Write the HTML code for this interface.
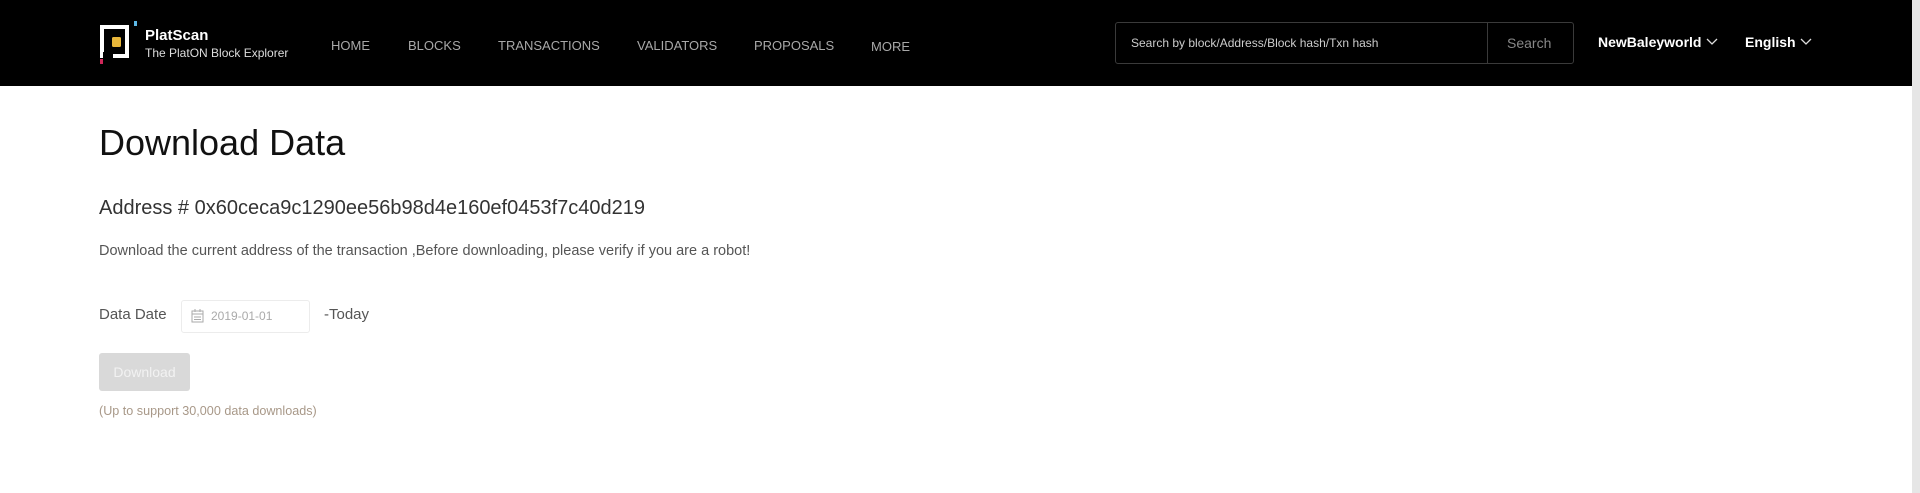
<!DOCTYPE html>
<html><head><meta charset="utf-8"><style>
*{margin:0;padding:0;box-sizing:border-box}
body{width:1920px;height:493px;overflow:hidden;background:#fff;font-family:"Liberation Sans",sans-serif;position:relative}
.hdr{position:absolute;left:0;top:0;width:1912px;height:86px;background:#000}
.sb{position:absolute;right:0;top:0;width:8px;height:493px;background:#e6e6e6}
.a{position:absolute;white-space:nowrap}
.nav{color:#a8a8a8;font-size:13px;top:38px}
</style></head><body>
<div class="hdr">
  <svg class="a" style="left:98px;top:20px" width="40" height="46" viewBox="0 0 40 46">
    <rect x="4" y="7" width="25" height="29" fill="none" stroke="#fff" stroke-width="4"/>
    <rect x="14" y="17" width="9" height="10" rx="1.5" fill="#e8b63a"/>
    <rect x="5" y="32" width="10" height="6" fill="#000"/>
    <rect x="36" y="1" width="3" height="5" fill="#5cb8e6"/>
    <rect x="2" y="39" width="3" height="5" fill="#d0285a"/>
  </svg>
  <div class="a" style="left:145px;top:27px;color:#fff;font-weight:bold;font-size:15px">PlatScan</div>
  <div class="a" style="left:145px;top:46px;color:#ddd;font-size:12px">The PlatON Block Explorer</div>
  <div class="a nav" style="left:331px">HOME</div>
  <div class="a nav" style="left:408px">BLOCKS</div>
  <div class="a nav" style="left:498px">TRANSACTIONS</div>
  <div class="a nav" style="left:637px">VALIDATORS</div>
  <div class="a nav" style="left:754px">PROPOSALS</div>
  <div class="a nav" style="left:871px;top:39px">MORE</div>
  <div class="a" style="left:1115px;top:22px;width:459px;height:42px;border:1px solid #3a3a3a;border-radius:3px"></div>
  <div class="a" style="left:1487px;top:22px;width:1px;height:42px;background:#3a3a3a"></div>
  <div class="a" style="left:1131px;top:36px;color:#ccc;font-size:12px">Search by block/Address/Block hash/Txn hash</div>
  <div class="a" style="left:1507px;top:35px;color:#888;font-size:14px">Search</div>
  <div class="a" style="left:1598px;top:34px;color:#fff;font-size:14px;font-weight:bold">NewBaleyworld</div>
  <div class="a" style="left:1745px;top:34px;color:#fff;font-size:14px;font-weight:bold">English</div>
  <svg class="a" style="left:1706px;top:38px" width="12" height="8"><path d="M1 1l5 5 5-5" fill="none" stroke="#ddd" stroke-width="1.3"/></svg>
  <svg class="a" style="left:1800px;top:38px" width="12" height="8"><path d="M1 1l5 5 5-5" fill="none" stroke="#ddd" stroke-width="1.3"/></svg>
</div>
<div class="sb"></div>
<div class="a" style="left:99px;top:122px;font-size:36px;color:#111">Download Data</div>
<div class="a" style="left:99px;top:197px;font-size:20px;color:#333">Address # 0x60ceca9c1290ee56b98d4e160ef0453f7c40d219</div>
<div class="a" style="left:99px;top:243px;font-size:14.5px;color:#555">Download the current address of the transaction ,Before downloading, please verify if you are a robot!</div>
<div class="a" style="left:99px;top:306px;font-size:15px;color:#555">Data Date</div>
<div class="a" style="left:181px;top:300px;width:129px;height:33px;border:1px solid #ececec;border-radius:3px"></div>
<svg class="a" style="left:191px;top:309px" width="13" height="14" viewBox="0 0 13 14"><rect x="1" y="2" width="11" height="11" fill="none" stroke="#aaa"/><path d="M1 5h11M4 0v3M9 0v3M3 8h7M3 10.5h7" stroke="#aaa"/></svg>
<div class="a" style="left:211px;top:309px;font-size:12px;color:#aaa">2019-01-01</div>
<div class="a" style="left:324px;top:306px;font-size:15px;color:#555">-Today</div>
<div class="a" style="left:99px;top:353px;width:91px;height:38px;background:#d9d9d9;border-radius:3px;color:#f2f2f2;font-size:14px;text-align:center;line-height:38px">Download</div>
<div class="a" style="left:99px;top:404px;font-size:12.6px;color:#a89888">(Up to support 30,000 data downloads)</div>
</body></html>
